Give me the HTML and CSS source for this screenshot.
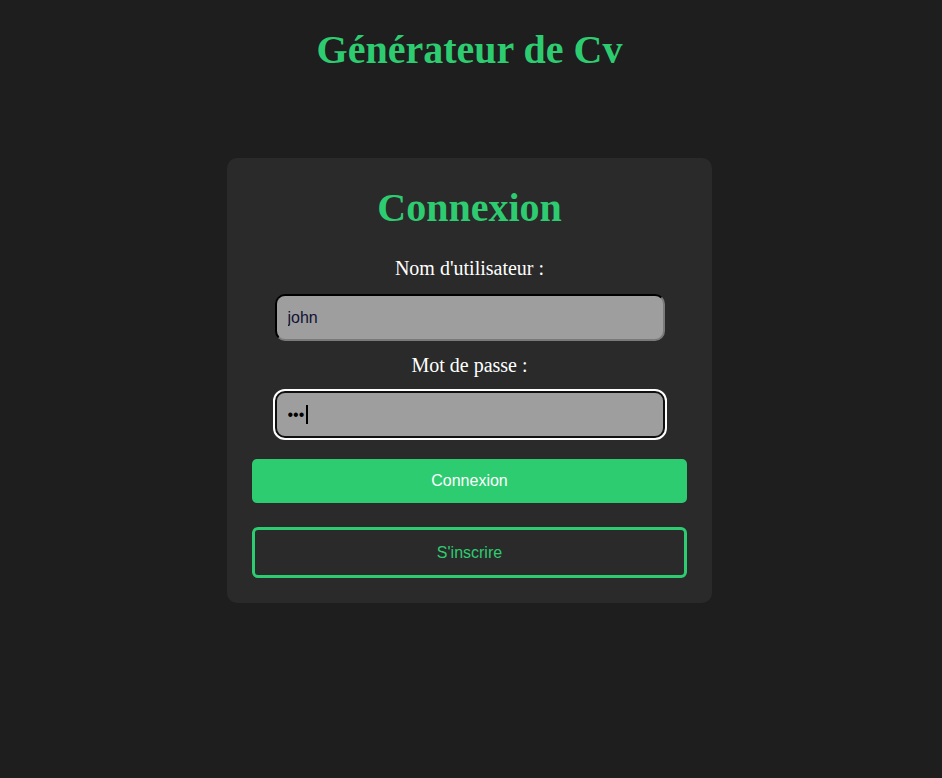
FILE: index.html
```html
<!DOCTYPE html>
<html lang="fr">
<head>
<meta charset="utf-8">
<title>Générateur de Cv</title>
<link rel="stylesheet" href="styles.css">
</head>
<body>
  <h1 class="site-title">Générateur de Cv</h1>
  <main class="card">
    <h2 class="card-title">Connexion</h2>
    <form class="login-form">
      <label class="field-label" for="username">Nom d'utilisateur :</label>
      <input class="field-input" id="username" type="text" value="john">
      <label class="field-label" for="password">Mot de passe :</label>
      <div class="field-wrap">
        <input class="field-input is-focused" id="password" type="password" value="abc">
        <span class="caret"></span>
      </div>
      <button type="button" class="btn btn-primary">Connexion</button>
      <button type="button" class="btn btn-outline">S'inscrire</button>
    </form>
  </main>
</body>
</html>
```

FILE: styles.css
```css
html, body {
  margin: 0;
  padding: 0;
}

body {
  background: #1e1e1e;
  font-family: "Liberation Serif", "Times New Roman", serif;
  color: #ffffff;
  display: flex;
  flex-direction: column;
  align-items: center;
  padding-right: 3px;
}

.site-title {
  margin: 27px 0 85px;
  font-size: 40px;
  font-weight: bold;
  color: #2ecc71;
  text-align: center;
  line-height: 46px;
}

.card {
  box-sizing: border-box;
  width: 485px;
  background: #2a2a2a;
  border-radius: 10px;
  padding: 27px 25px 25px;
  text-align: center;
}

.card-title {
  margin: 0 0 26px;
  font-size: 40px;
  line-height: 46px;
  font-weight: bold;
  color: #2ecc71;
}

.login-form {
  display: flex;
  flex-direction: column;
  align-items: center;
}

.field-label {
  display: block;
  font-size: 20px;
  line-height: 23px;
  color: #ffffff;
  margin-bottom: 14px;
}

.field-wrap {
  position: relative;
  width: 390px;
  margin-bottom: 21px;
}

.field-input {
  box-sizing: border-box;
  display: block;
  width: 390px;
  height: 47px;
  margin: 0 0 13px;
  padding: 0 11px;
  background: #9e9e9e;
  border: 2px inset #767676;
  border-top-color: #262626;
  border-left-color: #262626;
  border-bottom-color: #7a7a7a;
  border-right-color: #7a7a7a;
  border-radius: 10px;
  font-family: "Liberation Sans", Arial, sans-serif;
  font-size: 16px;
  color: #111133;
}

.field-input.is-focused {
  margin: 0;
  border: 2px solid #101010;
  outline: 2px solid #ffffff;
  outline-offset: 0;
  color: #000000;
}

.caret {
  position: absolute;
  left: 31px;
  top: 14px;
  width: 2px;
  height: 19px;
  background: #000000;
}

.btn {
  box-sizing: border-box;
  width: 435px;
  font-family: "Liberation Sans", Arial, sans-serif;
  font-size: 16px;
  cursor: pointer;
}

.btn-primary {
  height: 44px;
  background: #2ecc71;
  color: #ffffff;
  border: none;
  border-radius: 5px;
  margin-bottom: 24px;
}

.btn-outline {
  height: 51px;
  background: transparent;
  color: #2ecc71;
  border: 3px solid #2ecc71;
  border-radius: 6px;
}
```
